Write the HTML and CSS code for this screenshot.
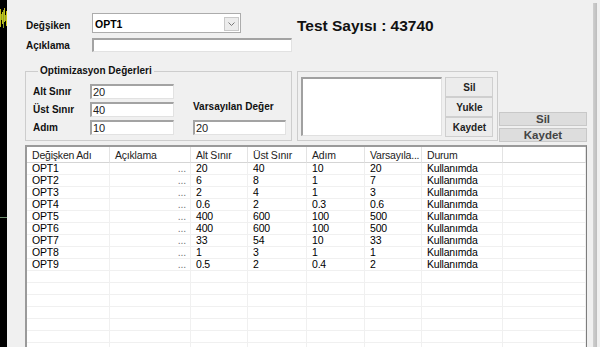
FILE: index.html
```html
<!DOCTYPE html>
<html lang="tr">
<head>
    <meta charset="UTF-8">
    <title>Optimizasyon</title>
    <link rel="stylesheet" href="styles.css">
</head>
<body>

    <div class="screen">
        <div class="chart-strip">
            <svg width="7" height="347" viewBox="0 0 7 347">
                <path d="M0.5 9 V27 M2.5 12 V24 M4.5 8 V22 M6.5 11 V26" stroke="#c9c21a" stroke-width="1"/>
                <path d="M1.5 14 V20 M3.5 10 V28 M5.5 15 V21" stroke="#8fa62a" stroke-width="1"/>
                <path d="M0 217.5 H7" stroke="#6f8f6f" stroke-width="1"/>
            </svg>
        </div>

        <div class="window">
            <div class="top-form">
                <label class="lbl var-lbl">Değşiken</label>
                <div class="combo">
                    <span class="combo-text">OPT1</span>
                    <span class="combo-btn">
                        <svg width="7" height="4" viewBox="0 0 7 4"><path d="M0.5 0.5 L3.5 3.5 L6.5 0.5" fill="none" stroke="#777" stroke-width="1"/></svg>
                    </span>
                </div>
                <div class="test-count">Test Sayısı : 43740</div>
                <label class="lbl desc-lbl">Açıklama</label>
                <div class="field desc-field"></div>
            </div>

            <div class="mid">
                <fieldset class="group opt-group">
                    <legend>Optimizasyon Değerleri</legend>
                    <div class="opt-grid">
                        <label class="lbl">Alt Sınır</label>
                        <div class="field">20</div>
                        <span></span>
                        <span></span>

                        <label class="lbl">Üst Sınır</label>
                        <div class="field">40</div>
                        <span></span>
                        <label class="lbl default-lbl">Varsayılan Değer</label>

                        <label class="lbl">Adım</label>
                        <div class="field">10</div>
                        <span></span>
                        <div class="field">20</div>
                    </div>
                </fieldset>

                <fieldset class="group preset-group">
                    <div class="preset-list"></div>
                    <div class="preset-btns">
                        <button class="btn">Sil</button>
                        <button class="btn">Yukle</button>
                        <button class="btn">Kaydet</button>
                    </div>
                </fieldset>

                <div class="side-btns">
                    <button class="flat-btn">Sil</button>
                    <button class="flat-btn">Kaydet</button>
                </div>
            </div>

            <div class="listview">
                <table>
                    <colgroup>
                        <col style="width:83px"><col style="width:81px"><col style="width:57px"><col style="width:59px">
                        <col style="width:58px"><col style="width:57px"><col style="width:81px"><col>
                    </colgroup>
                    <thead>
                        <tr>
                            <th>Değişken Adı</th><th>Açıklama</th><th>Alt Sınır</th><th>Üst Sınır</th>
                            <th>Adım</th><th>Varsayıla...</th><th>Durum</th><th></th>
                        </tr>
                    </thead>
                    <tbody id="rows"></tbody>
                </table>
            </div>
        </div>

        <div class="edge"></div>
    </div>

    <script>
        const data = [
            ["OPT1", "20", "40", "10", "20"],
            ["OPT2", "6", "8", "1", "7"],
            ["OPT3", "2", "4", "1", "3"],
            ["OPT4", "0.6", "2", "0.3", "0.6"],
            ["OPT5", "400", "600", "100", "500"],
            ["OPT6", "400", "600", "100", "500"],
            ["OPT7", "33", "54", "10", "33"],
            ["OPT8", "1", "3", "1", "1"],
            ["OPT9", "0.5", "2", "0.4", "2"]
        ];

        const tbody = document.getElementById("rows");
        data.forEach(function(r) {
            const tr = document.createElement("tr");
            tr.innerHTML = "<td>" + r[0] + "</td><td class='dots'>...</td><td>" + r[1] + "</td><td>" + r[2] +
                "</td><td>" + r[3] + "</td><td>" + r[4] + "</td><td>Kullanımda</td><td></td>";
            tbody.appendChild(tr);
        });
        for (let i = 0; i < 8; i++) {
            const tr = document.createElement("tr");
            tr.innerHTML = "<td>&nbsp;</td><td></td><td></td><td></td><td></td><td></td><td></td><td></td>";
            tbody.appendChild(tr);
        }
    </script>

</body>
</html>
```

FILE: styles.css
```css
html, body {
    margin: 0;
    height: 100%;
    overflow: hidden;
}

body {
    font-family: 'Liberation Sans', Arial, sans-serif;
    background: #f0f0f0;
    color: #000;
}

.screen {
    display: flex;
    height: 347px;
}

.chart-strip {
    width: 7px;
    background: #000;
    flex-shrink: 0;
}

.chart-strip svg {
    display: block;
}

.window {
    width: 586px;
    padding: 0 6px 0 18px;
    box-sizing: border-box;
    background: #f0f0f0;
}

.edge {
    width: 4px;
    margin-top: 3px;
    background: linear-gradient(90deg, #cfcfcf, #bdbdbd);
    border-right: 3px solid #f0f0f0;
}

.lbl {
    font-size: 10px;
    font-weight: bold;
    color: #111;
    white-space: nowrap;
}

/* top area */
.top-form {
    display: grid;
    grid-template-columns: 66px 149px 51px 1fr;
    grid-template-rows: 20px 14px;
    row-gap: 5px;
    padding: 13px 0 0 1px;
    align-items: center;
}

.var-lbl {
    margin-top: 5px;
}

.combo {
    display: flex;
    align-items: stretch;
    height: 20px;
    box-sizing: border-box;
    border: 1px solid #acacac;
    background: #fff;
}

.combo-text {
    flex: 1;
    font-size: 10.5px;
    font-weight: bold;
    line-height: 16px;
    padding: 2px 0 0 2px;
}

.combo-btn {
    width: 13px;
    margin: 3px 1px 1px 0;
    border: 1px solid #c9c9c9;
    background: #ececec;
    display: flex;
    align-items: center;
    justify-content: center;
}

.test-count {
    grid-row: 1;
    grid-column: 4;
    margin: 6px 0 0 5px;
    font-size: 15.5px;
    font-weight: bold;
    color: #111;
    white-space: nowrap;
}

.field {
    height: 15px;
    box-sizing: border-box;
    background: #fff;
    border-style: solid;
    border-width: 2px 1px 1px 2px;
    border-color: #a3a3a3 #e2e2e2 #e2e2e2 #a3a3a3;
    font-size: 11px;
    line-height: 12px;
    padding-left: 1px;
    color: #222;
}

.desc-lbl {
    grid-row: 2;
    grid-column: 1;
}

.desc-field {
    grid-row: 2;
    grid-column: 2 / 4;
    height: 14px;
}

/* middle area */
.mid {
    display: flex;
    align-items: flex-start;
    margin-top: 13px;
}

.group {
    margin: 0;
    border: 1px solid #cdcdcd;
    box-sizing: border-box;
}

.group legend {
    font-size: 10px;
    font-weight: bold;
    line-height: 12px;
    padding: 0 2px;
    margin-left: 5px;
    color: #111;
}

.opt-group {
    width: 268px;
    height: 76px;
    padding: 7px 0 0 7px;
}

.opt-grid {
    display: grid;
    grid-template-columns: 57px 84px 19px 93px;
    grid-template-rows: 15px 15px 15px;
    row-gap: 3px;
    align-items: center;
}

.default-lbl {
    align-self: start;
    margin-top: -1px;
}

.preset-group {
    width: 201px;
    height: 70px;
    margin: 6px 0 0 5px;
    padding: 5px 0 0 3px;
    display: flex;
    gap: 3px;
}

.preset-list {
    width: 141px;
    height: 59px;
    box-sizing: border-box;
    background: #fff;
    border-style: solid;
    border-width: 2px 1px 1px 2px;
    border-color: #a0a0a0 #e0e0e0 #e0e0e0 #a0a0a0;
}

.preset-btns {
    display: flex;
    flex-direction: column;
}

.btn {
    width: 48px;
    height: 20px;
    margin: 0;
    padding: 0;
    border: 1px solid #cfcfcf;
    background: #ececec;
    font-family: 'Liberation Sans', Arial, sans-serif;
    font-size: 10px;
    font-weight: bold;
    color: #222;
}

.side-btns {
    align-self: flex-end;
    margin: 0 0 -1px 1px;
    display: flex;
    flex-direction: column;
    gap: 2px;
}

.flat-btn {
    width: 88px;
    height: 14px;
    margin: 0;
    padding: 0;
    border: 1px solid #c8c8c8;
    background: #dddddd;
    font-family: 'Liberation Sans', Arial, sans-serif;
    font-size: 11.5px;
    font-weight: bold;
    line-height: 12px;
    color: #444;
}

/* list view */
.listview {
    margin-top: 4px;
    height: 210px;
    overflow: hidden;
    background: #fff;
    border-style: solid;
    border-width: 2px 1px 0 2px;
    border-color: #9a9a9a #7d7d7d #7d7d7d #9a9a9a;
}

.listview table {
    width: 100%;
    table-layout: fixed;
    border-collapse: separate;
    border-spacing: 0;
    font-size: 10.5px;
    letter-spacing: -0.2px;
}

.listview th {
    height: 15px;
    padding: 0 0 0 5px;
    text-align: left;
    font-weight: normal;
    color: #222;
    line-height: 14px;
    border-right: 1px solid #e3e3e3;
    border-bottom: 1px solid #d5d5d5;
    white-space: nowrap;
    overflow: hidden;
}

.listview td {
    padding: 0 0 0 5px;
    line-height: 11px;
    border-right: 1px solid #f0f0f0;
    border-bottom: 1px solid #f0f0f0;
    white-space: nowrap;
    overflow: hidden;
}

.listview td.dots {
    text-align: right;
    padding-right: 4px;
    color: #777;
}
```
